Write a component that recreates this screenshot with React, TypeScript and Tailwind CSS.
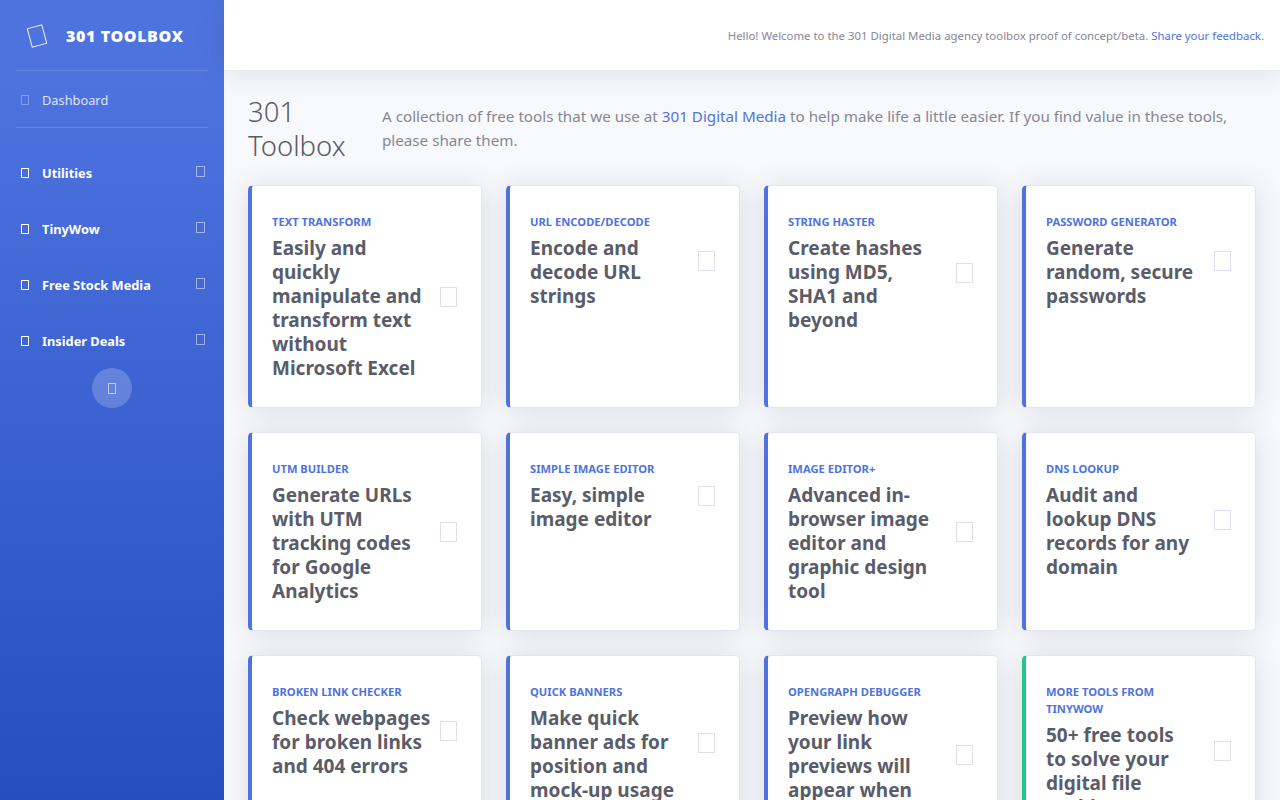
const FONT = "font-['Noto_Sans','Open_Sans',sans-serif]";

const tools = [
  { label: "Text Transform", title: "Easily and quickly manipulate and transform text without Microsoft Excel" },
  { label: "URL Encode/Decode", title: "Encode and decode URL strings" },
  { label: "String Haster", title: "Create hashes using MD5, SHA1\u00a0and beyond" },
  { label: "Password Generator", title: "Generate random, secure passwords" },
  { label: "UTM Builder", title: "Generate URLs with UTM tracking codes for Google Analytics" },
  { label: "Simple Image Editor", title: "Easy, simple image editor" },
  { label: "Image Editor+", title: "Advanced in-browser image editor and graphic design tool" },
  { label: "DNS Lookup", title: "Audit and lookup DNS records for any domain" },
  { label: "Broken Link Checker", title: "Check webpages for broken links and 404 errors" },
  { label: "Quick Banners", title: "Make quick banner ads for position and mock-up usage" },
  { label: "OpenGraph Debugger", title: "Preview how your link previews will appear when shared" },
  { label: "More Tools from TinyWow", title: "50+ free tools to\u00a0solve your digital file problems", green: true },
];

const navItems = ["Utilities", "TinyWow", "Free Stock Media", "Insider Deals"];

function NavItem({ label }: { label: string }) {
  return (
    <div className="flex h-14 items-center pl-[21px] pr-[19px]">
      <span className="h-[10px] w-2 shrink-0 border border-white" />
      <span className="ml-[13px] flex-1 pt-[2px] text-[12.8px] font-bold text-white">{label}</span>
      <span className="mb-[3px] h-[11px] w-[9px] shrink-0 border border-white/50" />
    </div>
  );
}

function ToolCard({ label, title, green }: { label: string; title: string; green?: boolean }) {
  return (
    <div
      className={`rounded-[5px] border border-l-4 border-y-[#e3e6f0] border-r-[#e3e6f0] bg-white pb-[27px] pl-5 pr-6 pt-[27px] shadow-[0_2px_28px_rgba(58,59,69,0.15)] ${
        green ? "border-l-[#1cc88a]" : "border-l-[#4e73df]"
      }`}
    >
      <div className="flex items-center">
        <div className="min-w-0 flex-1 pr-2">
          <div className="mb-[6px] text-[11.2px] font-bold uppercase leading-[17px] text-[#4e73df]">{label}</div>
          <div className="text-[19px] font-bold leading-6 text-[#5a5c69]">{title}</div>
        </div>
        <span className="h-5 w-[17px] shrink-0 border border-[#dddfeb]" />
      </div>
    </div>
  );
}

export default function App() {
  return (
    <div className={`flex h-screen overflow-hidden bg-[#f8f9fc] ${FONT}`}>
      <aside className="flex w-56 shrink-0 flex-col bg-[linear-gradient(180deg,#4e73df_10%,#224abe_110%)]">
        <div className="flex h-[70px] items-center pl-[29px] pt-[2px]">
          <span className="h-5 w-4 -rotate-[15deg] border border-white/90" />
          <span className="ml-[21px] text-[16px] font-black tracking-[0.6px] text-white">301 TOOLBOX</span>
        </div>
        <div className="mx-4 border-t border-white/15" />
        <div className="flex h-14 items-center pl-[21px] pt-[2px]">
          <span className="h-[10px] w-2 shrink-0 border border-white/30" />
          <span className="ml-[13px] pt-[2px] text-[12.8px] text-white/80">Dashboard</span>
        </div>
        <div className="mx-4 mb-[17px] border-t border-white/15" />
        {navItems.map((item) => (
          <NavItem key={item} label={item} />
        ))}
        <button className="mx-auto mt-[-1px] flex h-10 w-10 items-center justify-center rounded-full bg-white/20">
          <span className="h-[11px] w-2 border border-white/60" />
        </button>
      </aside>

      <div className="flex min-w-0 flex-1 flex-col">
        <header className="flex h-[70px] shrink-0 items-center justify-end bg-white pr-4 pt-[2px] shadow-[0_2px_28px_rgba(58,59,69,0.15)]">
          <p className="text-[11.4px] text-[#858796]">
            Hello! Welcome to the 301 Digital Media agency toolbox proof of concept/beta.{" "}
            <span className="text-[#4e73df]">Share your feedback.</span>
          </p>
        </header>

        <main className="px-6 pt-[25px]">
          <div className="mb-[23px] flex items-center pr-6">
            <h1 className="w-[134px] shrink-0 text-[27.5px] font-light leading-[33.6px] text-[#5a5c69]">
              301 Toolbox
            </h1>
            <p className="pb-[2px] text-[15.2px] leading-6 text-[#858796]">
              A collection of free tools that we use at <span className="text-[#4e73df]">301 Digital Media</span> to
              help make life a little easier. If you find value in these tools, please share them.
            </p>
          </div>
          <div className="grid grid-cols-4 gap-6">
            {tools.map((tool) => (
              <ToolCard key={tool.label} {...tool} />
            ))}
          </div>
        </main>
      </div>
    </div>
  );
}
